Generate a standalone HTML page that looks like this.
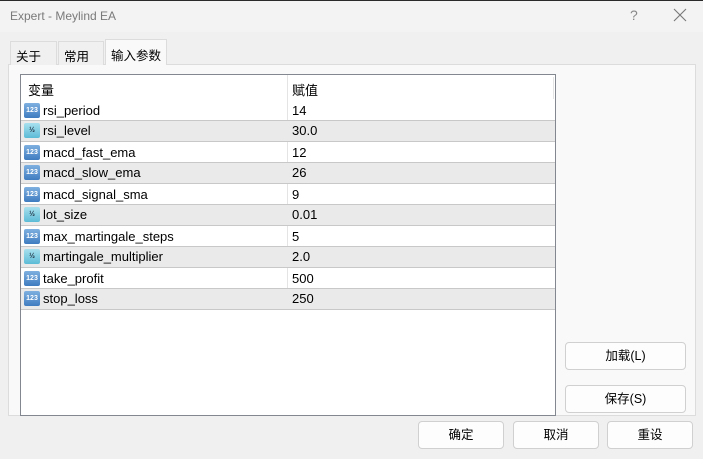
<!DOCTYPE html>
<html><head><meta charset="utf-8"><style>
*{margin:0;padding:0;box-sizing:border-box}
body{width:703px;height:459px;background:#f0f0f0;font-family:"Liberation Sans","Noto Sans CJK SC",sans-serif;font-size:13px;color:#000;position:relative;overflow:hidden}
.title{position:absolute;left:0;top:0;width:703px;height:32px;background:#f3f3f3;border-top:1px solid #2a2a2a}
.title span{position:absolute;left:10px;top:8px;color:#7a7a7a;font-size:12px}
.q{position:absolute;left:630px;top:6px;color:#888;font-size:14px}
.x{position:absolute;left:673px;top:7px}
.tab{position:absolute;top:41px;height:24px;border:1px solid #dcdcdc;border-bottom:none;background:#f0f0f0;padding:4px 0 0 5px;font-size:12.5px}
.tab.act{top:39px;height:26px;background:#f9f9f9;padding-top:5px}
.panel{position:absolute;left:8px;top:64px;width:688px;height:352px;background:#f9f9f9;border:1px solid #dcdcdc}
.list{position:absolute;left:20px;top:74px;width:536px;height:342px;background:#fff;border:1px solid #828790}
.hd{position:absolute;top:5px;font-size:13px}
.vline{position:absolute;left:266px;top:0;width:1px;height:210px;background:#e4e4e4}
.row{position:absolute;left:0;width:534px;height:21px}
.row.g{background:#eaeaea;border-top:1px solid #c8c8c8;border-bottom:1px solid #c8c8c8}
.row .n{position:absolute;left:22px;top:3px}
.row.g .n,.row.g .v{top:2px}
.row .v{position:absolute;left:271px;top:3px}
.ic{position:absolute;left:3px;top:3px;width:16px;height:15px;border-radius:2px;font-size:7px;font-weight:bold;line-height:15px;text-align:center;color:#fff}
.row.g .ic{top:2px}
.i1{background:linear-gradient(#7fb0e0,#3f7cc0);color:#fff}
.i2{background:linear-gradient(#a8e0ee,#5dbbd6);color:#234}
.btn{position:absolute;height:28px;background:#fdfdfd;border:1px solid #d0d0d0;border-radius:4px;text-align:center;line-height:26px;font-size:12.5px}
</style></head><body>
<div class="title"><span>Expert - Meylind EA</span><div class="q">?</div>
<svg class="x" width="14" height="14"><path d="M1 1L13 13M13 1L1 13" stroke="#777" stroke-width="1.1"/></svg></div>
<div class="panel"></div>
<div class="tab" style="left:10px;width:47px">关于</div>
<div class="tab" style="left:58px;width:46px">常用</div>
<div class="tab act" style="left:105px;width:62px">输入参数</div>
<div class="list">
<div class="hd" style="left:7px">变量</div>
<div class="hd" style="left:271px">赋值</div>
<div style="position:absolute;left:266px;top:0;width:1px;height:25px;background:#e4e4e4"></div>
<div style="position:absolute;left:532px;top:2px;width:1px;height:22px;background:#e4e4e4"></div>
<div style="position:absolute;top:25px;left:0;width:534px">
<div class="vline"></div>
<div class="row" style="top:0"><div class="ic i1">123</div><div class="n">rsi_period</div><div class="v">14</div></div>
<div class="row g" style="top:20px;height:22px"><div class="ic i2">½</div><div class="n">rsi_level</div><div class="v">30.0</div></div>
<div class="row" style="top:42px"><div class="ic i1">123</div><div class="n">macd_fast_ema</div><div class="v">12</div></div>
<div class="row g" style="top:62px;height:22px"><div class="ic i1">123</div><div class="n">macd_slow_ema</div><div class="v">26</div></div>
<div class="row" style="top:84px"><div class="ic i1">123</div><div class="n">macd_signal_sma</div><div class="v">9</div></div>
<div class="row g" style="top:104px;height:22px"><div class="ic i2">½</div><div class="n">lot_size</div><div class="v">0.01</div></div>
<div class="row" style="top:126px"><div class="ic i1">123</div><div class="n">max_martingale_steps</div><div class="v">5</div></div>
<div class="row g" style="top:146px;height:22px"><div class="ic i2">½</div><div class="n">martingale_multiplier</div><div class="v">2.0</div></div>
<div class="row" style="top:168px"><div class="ic i1">123</div><div class="n">take_profit</div><div class="v">500</div></div>
<div class="row g" style="top:188px;height:22px"><div class="ic i1">123</div><div class="n">stop_loss</div><div class="v">250</div></div>
</div>
</div>
<div class="btn" style="left:565px;top:342px;width:121px">加载(L)</div>
<div class="btn" style="left:565px;top:385px;width:121px">保存(S)</div>
<div class="btn" style="left:418px;top:421px;width:86px">确定</div>
<div class="btn" style="left:513px;top:421px;width:86px">取消</div>
<div class="btn" style="left:607px;top:421px;width:86px">重设</div>
</body></html>
